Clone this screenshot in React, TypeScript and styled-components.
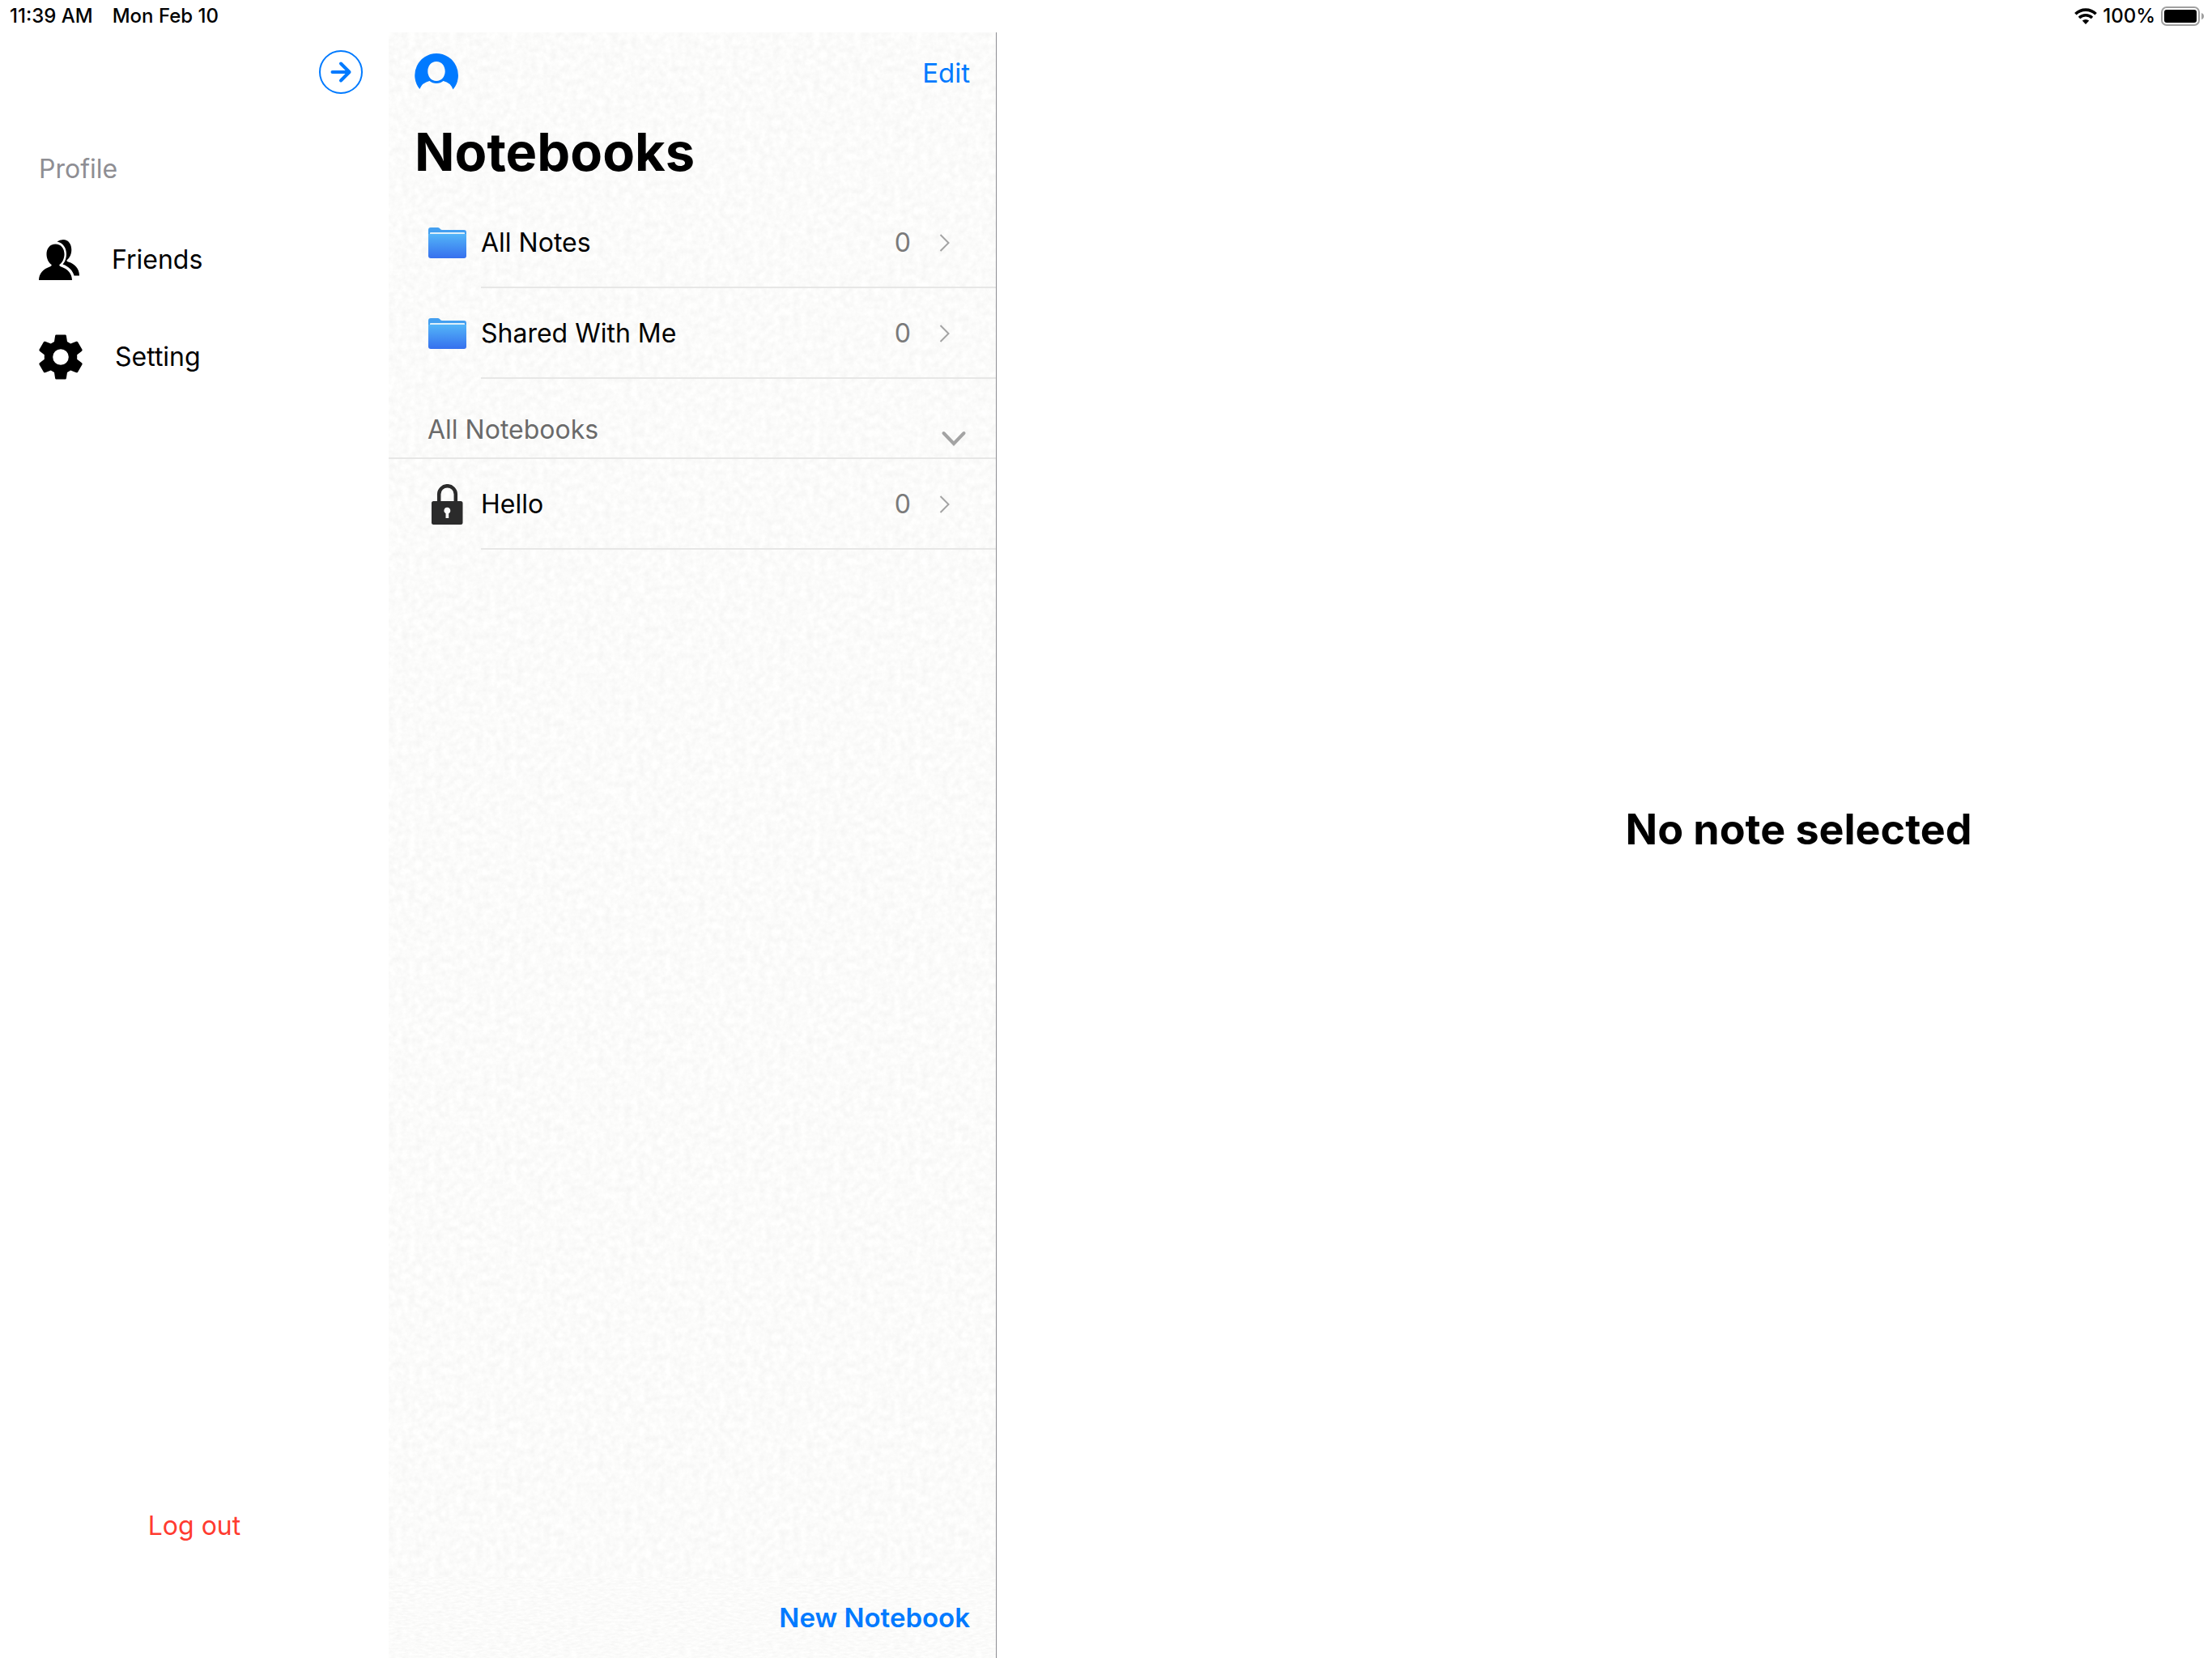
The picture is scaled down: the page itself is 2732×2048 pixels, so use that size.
import React, { useState } from "react";
import styled, { createGlobalStyle } from "styled-components";

const colors = {
  tint: "#007aff",
  danger: "#ff3b30",
  secondary: "#8e8e93",
  line: "#e7e7e6",
};

const paper = (frequency: string, seed: number) => {
  const svg = `<svg xmlns="http://www.w3.org/2000/svg" width="500" height="500"><filter id="p" x="0" y="0" width="100%" height="100%" color-interpolation-filters="sRGB"><feTurbulence type="fractalNoise" baseFrequency="${frequency}" numOctaves="4" seed="${seed}" stitchTiles="stitch"/><feColorMatrix values="0.06 0 0 0 0.955 0.06 0 0 0 0.955 0.06 0 0 0 0.951 0 0 0 0 1"/></filter><rect width="500" height="500" filter="url(#p)"/></svg>`;
  return `url("data:image/svg+xml,${encodeURIComponent(svg).replace(/\(/g, "%28").replace(/\)/g, "%29")}")`;
};

const GlobalStyle = createGlobalStyle`
  *, *::before, *::after { box-sizing: border-box; }
  body {
    margin: 0;
    background: #fff;
    color: #000;
    font-family: Inter, "Liberation Sans", sans-serif;
    font-size: 32px;
    line-height: 40px;
  }
  button {
    margin: 0;
    padding: 0;
    border: 0;
    background: none;
    color: inherit;
    font: inherit;
    text-align: left;
    cursor: pointer;
  }
  svg { display: block; flex: none; }
  h1, h2, p, ul { margin: 0; padding: 0; }
  ul { list-style: none; }
`;

const Screen = styled.div`
  display: flex;
  flex-direction: column;
  min-height: 100vh;
`;

const StatusBar = styled.header`
  display: flex;
  justify-content: space-between;
  height: 40px;
  padding: 0 9px 0 12px;
  font-size: 24px;
  font-weight: 500;
`;

const StatusGroup = styled.div<{ $gap: number }>`
  display: flex;
  align-items: center;
  gap: ${(p) => p.$gap}px;
`;

const Body = styled.div`
  display: flex;
  flex: 1;
`;

const Sidebar = styled.aside`
  display: flex;
  flex: none;
  flex-direction: column;
  width: 480px;
  padding-bottom: 143px;
`;

const SidebarTop = styled.div`
  display: flex;
  justify-content: flex-end;
  padding: 22px 32px 73px;
`;

const SidebarLabel = styled.h2`
  padding: 0 48px 32px;
  color: ${colors.secondary};
  font-size: 32px;
  font-weight: 400;
`;

const MenuItem = styled.button`
  display: flex;
  align-items: center;
  gap: 40px;
  width: 100%;
  height: 120px;
  padding: 0 48px;
`;

const LogOut = styled.button`
  align-self: center;
  margin-top: auto;
  color: ${colors.danger};
`;

const Panel = styled.section`
  display: flex;
  flex: none;
  flex-direction: column;
  width: 751px;
  border-right: 1px solid ${colors.secondary};
  background: #fbfbfa ${paper("0.12", 4)};
`;

const PanelTop = styled.div`
  display: flex;
  align-items: center;
  justify-content: space-between;
  height: 100px;
  padding: 0 32px;
`;

const TextButton = styled.button<{ $strong?: boolean }>`
  color: ${colors.tint};
  font-size: 33px;
  font-weight: ${(p) => (p.$strong ? 600 : 400)};
`;

const PanelTitle = styled.h1`
  padding: 8px 32px 16px;
  font-size: 65px;
  font-weight: 700;
  line-height: 80px;
`;

const Row = styled.button`
  display: flex;
  gap: 18px;
  width: 100%;
  height: 112px;
  padding-left: 48px;
`;

const RowIcon = styled.span`
  display: flex;
  align-items: center;
  justify-content: center;
  width: 48px;
  height: 112px;
`;

const RowContent = styled.span`
  display: flex;
  flex: 1;
  align-items: center;
  height: 112px;
  padding: 2px 56px 0 0;
  border-bottom: 2px solid ${colors.line};
`;

const RowName = styled.span`
  flex: 1;
`;

const RowCount = styled.span`
  margin-right: 35px;
  color: #7a7a7a;
`;

const SectionHeader = styled.button`
  display: flex;
  align-items: flex-end;
  justify-content: space-between;
  width: 100%;
  height: 99px;
  padding: 0 36px 14px 48px;
  border-bottom: 2px solid ${colors.line};
  color: #6a6a6a;
`;

const PanelFooter = styled.footer`
  display: flex;
  align-items: center;
  justify-content: flex-end;
  height: 100px;
  margin-top: auto;
  padding: 0 32px;
  background: #fbfbfa ${paper("0.12 0.4", 9)};
`;

const Detail = styled.main`
  display: flex;
  flex: 1;
  align-items: center;
  justify-content: center;
  padding: 0 0 38px 480px;
`;

const EmptyMessage = styled.p`
  font-size: 52px;
  font-weight: 700;
  line-height: 64px;
`;

const WifiIcon = () => (
  <svg width="28" height="20" viewBox="0 0 28 20" aria-hidden="true">
    <g fill="none" stroke="#000" strokeWidth="3.6">
      <path d="M1.4 7.2a18.2 18.2 0 0 1 25.2 0" />
      <path d="M6 12a11.6 11.6 0 0 1 16 0" />
    </g>
    <path d="M14 20l-4.2-4.4a6.2 6.2 0 0 1 8.4 0z" />
  </svg>
);

const BatteryIcon = () => (
  <svg width="54" height="24" viewBox="0 0 54 24" role="img" aria-label="Battery full">
    <rect x="1" y="1" width="46" height="22" rx="6" fill="none" stroke="#a0a0a0" strokeWidth="2" />
    <rect x="4" y="4" width="40" height="16" rx="3" />
    <path d="M50 8q3 1 3 4t-3 4z" fill="#a0a0a0" />
  </svg>
);

const ArrowCircleIcon = () => (
  <svg width="54" height="54" viewBox="0 0 54 54" fill="none" stroke={colors.tint} aria-hidden="true">
    <circle cx="27" cy="27" r="26" strokeWidth="2" />
    <path d="M16.500 27H37M27 16.500L37.500 27L27 37.500" strokeWidth="4" strokeLinecap="round" strokeLinejoin="round" />
  </svg>
);

const AvatarIcon = () => (
  <svg width="54" height="48" viewBox="0 0 54 48" aria-hidden="true">
    <path
      fill={colors.tint}
      fillRule="evenodd"
      d="M27 0A27 27 0 0 1 47.500 44.500Q44.500 36 35.500 34Q32 37 27 37T18.500 34Q9.500 36 6.300 44A27 27 0 0 1 27 0ZM27 10C20.500 10 16.300 15.500 16.300 22S20.500 34 27 34S37.700 28.500 37.700 22S33.500 10 27 10Z"
    />
  </svg>
);

const FriendsIcon = () => (
  <svg width="50" height="50" viewBox="0 0 50 50" aria-hidden="true">
    <path d="M20.500 5.500C27.500 5.500 31.500 11 31.500 18C31.500 23.500 29 28.500 25.300 31C25.300 32.500 26 33 27.500 33.400C35.500 36 41 42 41 50H0C0 42 5.500 36 13.500 33.400C15 33 15.700 32.500 15.700 31C12 28.500 9.500 23.500 9.500 18C9.500 11 13.500 5.500 20.500 5.500Z" />
    <path d="M22.500 2.500Q25.500 0 30 0C36.500 0 40.300 5.500 40.300 12.500C40.300 18 38 22.500 34.500 25.300C34.500 26.700 35 27.200 36.500 27.600C44.500 30 50 36 50 44.500H43.500C42 38.500 37 33 29.500 30.500C32.500 27 34 22.500 34 18C34 10 29.500 3.500 22.500 2.500Z" />
  </svg>
);

const GearIcon = () => (
  <svg width="54" height="56" viewBox="0 0 54 56" aria-hidden="true">
    <path
      fillRule="evenodd"
      d="M21.400 0.500H32.600Q33.600 0.500 33.900 1.800L35 9L39.200 11.400L46.200 8.800Q47.400 8.500 48 9.300L53.500 18.800Q54 20 53 20.700L47.200 25.300V30.700L53 35.300Q54 36 53.500 37.200L48 46.700Q47.400 47.500 46.200 47.200L39.200 44.600L35 47L33.900 54.200Q33.600 55.500 32.600 55.500H21.400Q20.400 55.500 20.100 54.200L19 47L14.800 44.600L7.800 47.200Q6.600 47.500 6 46.700L0.500 37.200Q0 36 1 35.300L6.800 30.700V25.300L1 20.700Q0 20 0.500 18.800L6 9.300Q6.600 8.500 7.800 8.800L14.800 11.400L19 9L20.100 1.800Q20.400 0.500 21.400 0.500ZM27 18.200A9.800 9.800 0 1 0 27 37.800A9.800 9.800 0 1 0 27 18.200Z"
    />
  </svg>
);

const FolderIcon = () => (
  <svg width="48" height="38" viewBox="0 0 48 38" aria-hidden="true">
    <defs>
      <linearGradient id="folder" x1="0" y1="0" x2="0" y2="1">
        <stop offset="0" stopColor="#53b5f8" />
        <stop offset="1" stopColor="#3670ee" />
      </linearGradient>
    </defs>
    <path fill="#439ff0" d="M1 3Q1 0 4 0H13Q14.500 0 15.500 1.500T18.500 3H45Q48 3 48 6V12H1Z" />
    <path fill="url(#folder)" d="M1 8H48V35Q48 38 45 38H4Q1 38 1 35Z" />
    <path fill="#deeffa" d="M3 8V7Q3 6 4 6H45Q46 6 46 7V8Z" />
  </svg>
);

const LockIcon = () => (
  <svg width="40" height="50" viewBox="0 0 40 50" aria-hidden="true">
    <path fill="none" stroke="#2b2b2b" strokeWidth="4.500" d="M10.200 23V12.500A10.300 10.300 0 0 1 30.800 12.500V23" />
    <path
      fill="#2b2b2b"
      fillRule="evenodd"
      d="M3.500 21H37Q39.500 21 39.500 23.500V47.500Q39.500 50 37 50H3.500Q1 50 1 47.500V23.500Q1 21 3.500 21ZM20.300 28.800A4 4 0 0 0 18.500 36.300V42H22.200V36.300A4 4 0 0 0 20.300 28.800Z"
    />
  </svg>
);

const ChevronRight = () => (
  <svg width="14" height="24" viewBox="0 0 14 24" fill="none" stroke="#a3a3a3" strokeWidth="2" aria-hidden="true">
    <path d="M1.500 2L11.500 12L1.500 22" />
  </svg>
);

const ChevronDown = ({ open }: { open: boolean }) => (
  <svg width="32" height="20" viewBox="0 0 32 20" fill="none" stroke="#a3a3a3" strokeWidth="4" strokeLinecap="round" aria-hidden="true">
    <path d={open ? "M3.500 4L16 17L28.500 4" : "M3.500 17L16 4L28.500 17"} />
  </svg>
);

interface NotebookRowProps {
  icon: React.ReactNode;
  name: string;
  count: number;
}

const NotebookRow = ({ icon, name, count }: NotebookRowProps) => (
  <li>
    <Row type="button">
      <RowIcon>{icon}</RowIcon>
      <RowContent>
        <RowName>{name}</RowName>
        <RowCount>{count}</RowCount>
        <ChevronRight />
      </RowContent>
    </Row>
  </li>
);

export default function App() {
  const [open, setOpen] = useState(true);

  return (
    <>
      <GlobalStyle />
      <Screen>
        <StatusBar>
          <StatusGroup $gap={24}>
            <span>11:39 AM</span>
            <span>Mon Feb 10</span>
          </StatusGroup>
          <StatusGroup $gap={7}>
            <WifiIcon />
            <span>100%</span>
            <BatteryIcon />
          </StatusGroup>
        </StatusBar>
        <Body>
          <Sidebar>
            <SidebarTop>
              <button type="button" aria-label="Close menu">
                <ArrowCircleIcon />
              </button>
            </SidebarTop>
            <SidebarLabel>Profile</SidebarLabel>
            <nav>
              <MenuItem type="button">
                <FriendsIcon />
                Friends
              </MenuItem>
              <MenuItem type="button">
                <GearIcon />
                Setting
              </MenuItem>
            </nav>
            <LogOut type="button">Log out</LogOut>
          </Sidebar>
          <Panel>
            <PanelTop>
              <button type="button" aria-label="Profile">
                <AvatarIcon />
              </button>
              <TextButton type="button">Edit</TextButton>
            </PanelTop>
            <PanelTitle>Notebooks</PanelTitle>
            <ul>
              <NotebookRow icon={<FolderIcon />} name="All Notes" count={0} />
              <NotebookRow icon={<FolderIcon />} name="Shared With Me" count={0} />
            </ul>
            <SectionHeader type="button" aria-expanded={open} onClick={() => setOpen(!open)}>
              All Notebooks
              <ChevronDown open={open} />
            </SectionHeader>
            {open && (
              <ul>
                <NotebookRow icon={<LockIcon />} name="Hello" count={0} />
              </ul>
            )}
            <PanelFooter>
              <TextButton type="button" $strong>
                New Notebook
              </TextButton>
            </PanelFooter>
          </Panel>
          <Detail>
            <EmptyMessage>No note selected</EmptyMessage>
          </Detail>
        </Body>
      </Screen>
    </>
  );
}
